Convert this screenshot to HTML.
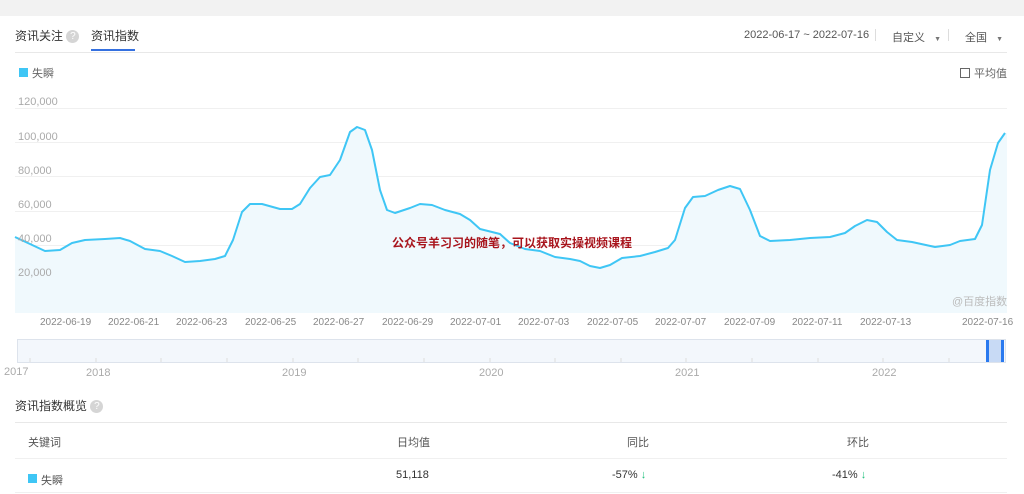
<!DOCTYPE html>
<html><head><meta charset="utf-8"><style>
*{margin:0;padding:0;box-sizing:border-box}
body{width:1024px;height:494px;background:#fff;position:relative;overflow:hidden;font-family:"Liberation Sans","Noto Sans CJK SC",sans-serif;color:#333;font-size:12px}
.a{position:absolute;white-space:nowrap}
.g{color:#aaa;font-size:11px}
.d{color:#888;font-size:10px;top:317px}
.q{display:inline-block;width:13px;height:13px;border-radius:50%;background:#d5d5d5;color:#fff;font-size:10px;text-align:center;line-height:13px;vertical-align:middle}
.line{position:absolute;height:1px;background:#e8e8e8}
</style></head><body>
<div class="a" style="left:0;top:0;width:1024px;height:16px;background:#f2f2f2"></div>
<div class="a" style="left:15px;top:27px;font-size:12px;color:#333">资讯关注 <span class="q">?</span></div>
<div class="a" style="left:91px;top:27px;font-size:12px;color:#333">资讯指数</div>
<div class="a" style="left:91px;top:49px;width:44px;height:2px;background:#3470e0"></div>
<div class="line" style="left:15px;top:52px;width:992px"></div>
<div class="a" style="left:744px;top:29px;font-size:11px;color:#555">2022-06-17 ~ 2022-07-16</div>
<div class="a" style="left:875px;top:29px;width:1px;height:12px;background:#ddd"></div>
<div class="a" style="left:892px;top:29px;font-size:11px;color:#555">自定义 &nbsp;&nbsp;<span style="font-size:7px;color:#777">▼</span></div>
<div class="a" style="left:948px;top:29px;width:1px;height:12px;background:#ddd"></div>
<div class="a" style="left:965px;top:29px;font-size:11px;color:#555">全国 &nbsp;&nbsp;<span style="font-size:7px;color:#777">▼</span></div>
<div class="a" style="left:19px;top:68px;width:9px;height:9px;background:#3fc6f5"></div>
<div class="a" style="left:32px;top:65px;font-size:11px;color:#666">失瞬</div>
<div class="a" style="left:960px;top:68px;width:10px;height:10px;border:1px solid #666"></div>
<div class="a" style="left:974px;top:65px;font-size:11px;color:#666">平均值</div>
<svg class="a" style="left:0;top:0" width="1024" height="494">
<g stroke="#f0f0f0" stroke-width="1">
<line x1="15" y1="108.5" x2="1007" y2="108.5"/><line x1="15" y1="142.5" x2="1007" y2="142.5"/><line x1="15" y1="176.5" x2="1007" y2="176.5"/><line x1="15" y1="211.5" x2="1007" y2="211.5"/><line x1="15" y1="245.5" x2="1007" y2="245.5"/><line x1="15" y1="279.5" x2="1007" y2="279.5"/>
</g>
<polygon fill="#f0f9fd" points="15,313 15,237 30,244 45,251 60,250 72,243 85,240 105,239 120,238 130,241 145,249 160,251 172,256 185,262 200,261 215,259 225,256 233,240 242,212 250,204 262,204 280,209 292,209 300,204 310,188 320,177 330,175 340,160 350,132 357,127 365,130 372,150 380,190 387,210 395,213 410,208 420,204 432,205 445,210 460,214 470,220 480,229 492,232 500,234 510,243 525,249 540,251 555,257 570,259 580,261 590,266 600,268 610,265 622,258 640,256 655,252 668,248 675,240 685,208 693,197 705,196 718,190 730,186 740,189 750,210 760,236 770,241 790,240 810,238 830,237 845,233 855,226 867,220 877,222 887,232 897,240 912,242 935,247 950,245 960,241 975,239 982,225 990,170 998,143 1005,133 1007,133 1007,313"/>
<polyline fill="none" stroke="#3fc6f5" stroke-width="2" stroke-linejoin="round" points="15,237 30,244 45,251 60,250 72,243 85,240 105,239 120,238 130,241 145,249 160,251 172,256 185,262 200,261 215,259 225,256 233,240 242,212 250,204 262,204 280,209 292,209 300,204 310,188 320,177 330,175 340,160 350,132 357,127 365,130 372,150 380,190 387,210 395,213 410,208 420,204 432,205 445,210 460,214 470,220 480,229 492,232 500,234 510,243 525,249 540,251 555,257 570,259 580,261 590,266 600,268 610,265 622,258 640,256 655,252 668,248 675,240 685,208 693,197 705,196 718,190 730,186 740,189 750,210 760,236 770,241 790,240 810,238 830,237 845,233 855,226 867,220 877,222 887,232 897,240 912,242 935,247 950,245 960,241 975,239 982,225 990,170 998,143 1005,133"/>
<rect x="17.5" y="339.5" width="988" height="23" fill="#f3f7fc" stroke="#dde3ec"/>
<g stroke="#ddd"><line x1="30" y1="358" x2="30" y2="362"/><line x1="96" y1="358" x2="96" y2="362"/><line x1="161" y1="358" x2="161" y2="362"/><line x1="227" y1="358" x2="227" y2="362"/><line x1="293" y1="358" x2="293" y2="362"/><line x1="358" y1="358" x2="358" y2="362"/><line x1="424" y1="358" x2="424" y2="362"/><line x1="490" y1="358" x2="490" y2="362"/><line x1="555" y1="358" x2="555" y2="362"/><line x1="621" y1="358" x2="621" y2="362"/><line x1="686" y1="358" x2="686" y2="362"/><line x1="752" y1="358" x2="752" y2="362"/><line x1="818" y1="358" x2="818" y2="362"/><line x1="883" y1="358" x2="883" y2="362"/><line x1="949" y1="358" x2="949" y2="362"/></g>
<rect x="987" y="340" width="17" height="22" fill="#c8daf5"/>
<rect x="986" y="340" width="3" height="22" fill="#2979ef"/>
<rect x="1001" y="340" width="3" height="22" fill="#2979ef"/>
</svg>
<div class="a g" style="left:18px;top:96px">120,000</div>
<div class="a g" style="left:18px;top:131px">100,000</div>
<div class="a g" style="left:18px;top:165px">80,000</div>
<div class="a g" style="left:18px;top:199px">60,000</div>
<div class="a g" style="left:18px;top:233px">40,000</div>
<div class="a g" style="left:18px;top:267px">20,000</div>
<div class="a g" style="left:952px;top:293px;color:#bbb">@百度指数</div>
<div class="a" style="left:392px;top:234px;font-size:12px;font-weight:bold;color:#a8141c">公众号羊习习的随笔，可以获取实操视频课程</div>
<div class="a d" style="left:40px">2022-06-19</div>
<div class="a d" style="left:108px">2022-06-21</div>
<div class="a d" style="left:176px">2022-06-23</div>
<div class="a d" style="left:245px">2022-06-25</div>
<div class="a d" style="left:313px">2022-06-27</div>
<div class="a d" style="left:382px">2022-06-29</div>
<div class="a d" style="left:450px">2022-07-01</div>
<div class="a d" style="left:518px">2022-07-03</div>
<div class="a d" style="left:587px">2022-07-05</div>
<div class="a d" style="left:655px">2022-07-07</div>
<div class="a d" style="left:724px">2022-07-09</div>
<div class="a d" style="left:792px">2022-07-11</div>
<div class="a d" style="left:860px">2022-07-13</div>
<div class="a d" style="left:962px">2022-07-16</div>
<div class="a g" style="left:4px;top:366px">2017</div>
<div class="a g" style="left:86px;top:367px">2018</div>
<div class="a g" style="left:282px;top:367px">2019</div>
<div class="a g" style="left:479px;top:367px">2020</div>
<div class="a g" style="left:675px;top:367px">2021</div>
<div class="a g" style="left:872px;top:367px">2022</div>
<div class="a" style="left:15px;top:397px;font-size:12px;color:#333">资讯指数概览 <span class="q">?</span></div>
<div class="line" style="left:15px;top:422px;width:992px"></div>
<div class="a" style="left:28px;top:434px;font-size:11px;color:#555">关键词</div>
<div class="a" style="left:397px;top:434px;font-size:11px;color:#555">日均值</div>
<div class="a" style="left:627px;top:434px;font-size:11px;color:#555">同比</div>
<div class="a" style="left:847px;top:434px;font-size:11px;color:#555">环比</div>
<div class="line" style="left:15px;top:458px;width:992px;background:#f0f0f0"></div>
<div class="a" style="left:28px;top:474px;width:9px;height:9px;background:#3fc6f5"></div>
<div class="a" style="left:41px;top:472px;font-size:11px;color:#555">失瞬</div>
<div class="a" style="left:396px;top:469px;font-size:11px;color:#333">51,118</div>
<div class="a" style="left:612px;top:469px;font-size:11px;color:#333">-57% <span style="color:#1dbf7b;font-size:11px;font-weight:bold">↓</span></div>
<div class="a" style="left:832px;top:469px;font-size:11px;color:#333">-41% <span style="color:#1dbf7b;font-size:11px;font-weight:bold">↓</span></div>
<div class="line" style="left:15px;top:492px;width:992px;background:#f0f0f0"></div>
</body></html>
